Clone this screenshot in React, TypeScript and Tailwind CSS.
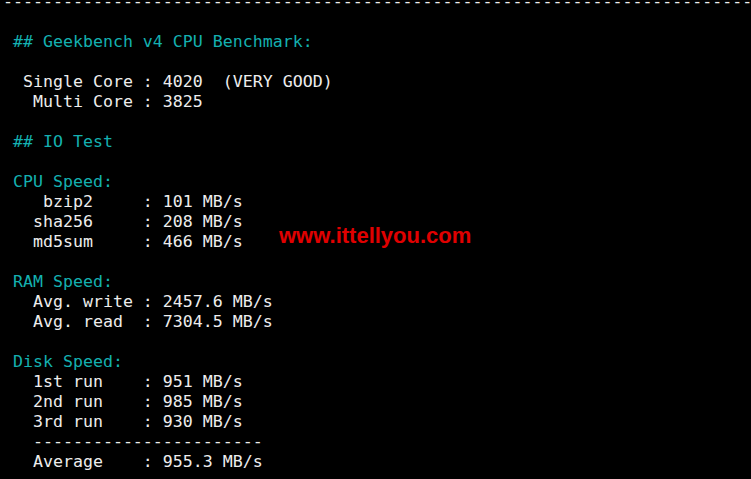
const lines: { text: string; cyan?: boolean }[] = [
  { text: '-'.repeat(80) },
  { text: '' },
  { text: ' ## Geekbench v4 CPU Benchmark:', cyan: true },
  { text: '' },
  { text: '  Single Core : 4020  (VERY GOOD)' },
  { text: '   Multi Core : 3825' },
  { text: '' },
  { text: ' ## IO Test', cyan: true },
  { text: '' },
  { text: ' CPU Speed:', cyan: true },
  { text: '    bzip2     : 101 MB/s' },
  { text: '   sha256     : 208 MB/s' },
  { text: '   md5sum     : 466 MB/s' },
  { text: '' },
  { text: ' RAM Speed:', cyan: true },
  { text: '   Avg. write : 2457.6 MB/s' },
  { text: '   Avg. read  : 7304.5 MB/s' },
  { text: '' },
  { text: ' Disk Speed:', cyan: true },
  { text: '   1st run    : 951 MB/s' },
  { text: '   2nd run    : 985 MB/s' },
  { text: '   3rd run    : 930 MB/s' },
  { text: '   -----------------------' },
  { text: '   Average    : 955.3 MB/s' },
]

export default function App() {
  return (
    <div className="relative w-[751px] h-[479px] overflow-hidden bg-black">
      <div className="-mt-2 pl-[3px] font-['DejaVu_Sans_Mono',monospace] text-[16.6px] leading-[20px] whitespace-pre">
        {lines.map((l, i) => (
          <div key={i} className={l.cyan ? 'text-[#14b0b0]' : 'text-[#ededed]'}>
            {l.text || ' '}
          </div>
        ))}
      </div>
      {/* watermark */}
      <div className="absolute left-[279px] top-[225px] font-['Liberation_Sans',Arial,sans-serif] font-bold text-[22px] leading-none text-[#e00000]">
        www.ittellyou.com
      </div>
    </div>
  )
}
